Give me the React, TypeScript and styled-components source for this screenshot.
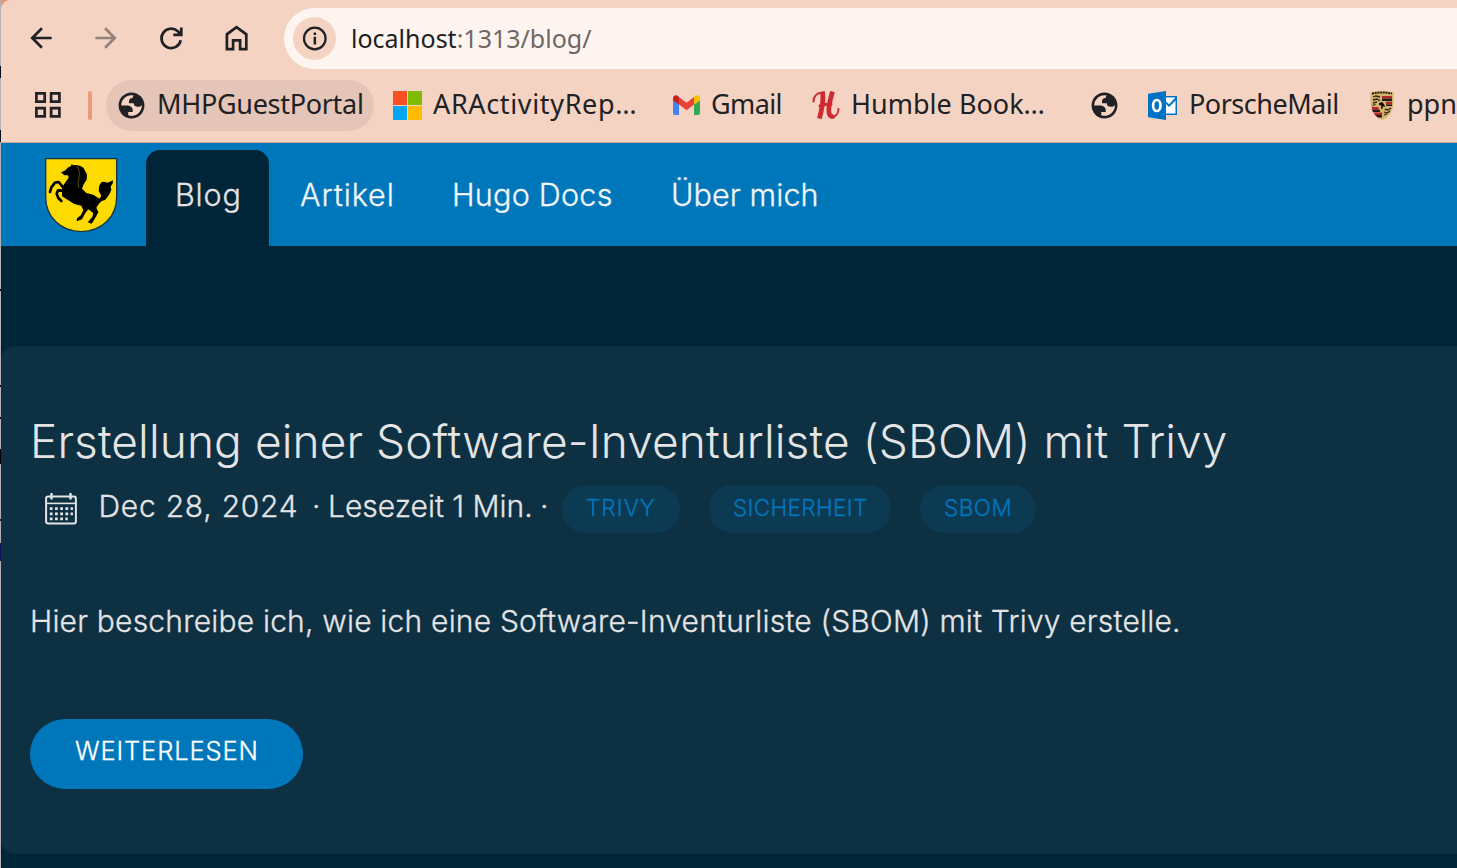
import React from 'react';
import styled, { createGlobalStyle } from 'styled-components';

const GlobalStyle = createGlobalStyle`
  *, *::before, *::after { box-sizing: border-box; }
  body { margin: 0; background: #012538; overflow: hidden; }
`;

const Window = styled.div`
  width: 1457px;
  height: 868px;
  overflow: hidden;
  display: grid;
  grid-template-columns: 1px 1456px;
  background: #012538;
`;

const DesktopEdge = styled.div`
  background: linear-gradient(
    #b4b2b1 0 66px, #0a0a20 66px 78px, #b4b2b1 78px 130px, #0a0a20 130px 142px,
    #b4b2b1 142px 289px, #111 289px 291px, #b4b2b1 291px 385px, #111 385px 387px,
    #b4b2b1 387px 417px, #111 417px 419px, #b4b2b1 419px 449px, #000 449px 464px,
    #b4b2b1 464px 519px, #111 519px 521px, #b4b2b1 521px 543px, #061052 543px 561px, #b4b2b1 561px
  );
`;

const Browser = styled.div`
  display: flex;
  flex-direction: column;
  min-width: 0;
  overflow: hidden;
  background: #e99671;
`;

const Chrome = styled.header`
  height: 143px;
  flex: none;
  background: #f5d3c3;
  border-bottom: 1px solid #cfa899;
  border-top-left-radius: 9px;
  font-family: "Noto Sans", "Open Sans", sans-serif;
  color: #202124;
`;

const Toolbar = styled.div`
  display: flex;
  align-items: center;
  height: 77px;
  padding: 8px 0 8px 24px;
`;

const ToolButton = styled.div<{ $faded?: boolean }>`
  width: 32px;
  height: 61px;
  margin-right: 33px;
  padding-bottom: 1px;
  flex: none;
  display: flex;
  align-items: center;
  opacity: ${p => (p.$faded ? 0.45 : 1)};
`;

const AddressBar = styled.div`
  flex: 1;
  height: 61px;
  margin-left: -1px;
  display: flex;
  align-items: center;
  padding-left: 9px;
  border-radius: 31px 0 0 31px;
  background: #fef5f1;
  font-size: 25px;
  line-height: 61px;
  white-space: pre;
`;

const InfoBadge = styled.div`
  width: 43px;
  height: 43px;
  margin-right: 15px;
  border-radius: 50%;
  background: #f5d3c3;
  display: flex;
`;

const UrlPath = styled.span`
  color: #6f6864;
`;

const BookmarkBar = styled.div`
  display: flex;
  align-items: center;
  height: 56px;
  padding-left: 33px;
  svg { flex: none; }
`;

const Divider = styled.i`
  width: 4px;
  height: 29px;
  margin: 0 14px 0 26px;
  border-radius: 2px;
  background: #ea9b77;
  flex: none;
`;

const Bookmark = styled.div<{ $width: number; $gap?: number; $spacing?: number; $active?: boolean }>`
  flex: none;
  display: flex;
  align-items: center;
  height: 51px;
  width: ${p => p.$width}px;
  margin-right: ${p => (p.$active ? 19 : 0)}px;
  gap: ${p => p.$gap ?? 11}px;
  padding-left: ${p => (p.$active ? 10 : 0)}px;
  border-radius: 26px;
  background: ${p => (p.$active ? '#e4c5b8' : 'transparent')};
  font-size: 27px;
  line-height: 47px;
  letter-spacing: ${p => p.$spacing ?? 0}px;
  white-space: nowrap;
`;

const Label = styled.span`
  height: 51px;
`;

const Site = styled.div`
  flex: 1;
  background: #012538;
  font-family: Inter, "Liberation Sans", sans-serif;
  font-weight: 300;
  -webkit-text-stroke: 0.3px currentColor;
  color: #e4e4e4;
  white-space: nowrap;
`;

const NavBar = styled.nav`
  height: 103px;
  padding-left: 43px;
  display: flex;
  align-items: flex-end;
  background: #0077bb;
`;

const Brand = styled.div`
  width: 102px;
  height: 96px;
`;

const NavItem = styled.a<{ $width: number; $spacing: number; $active?: boolean }>`
  width: ${p => p.$width}px;
  height: 96px;
  padding-left: 29px;
  margin-right: 2px;
  border-radius: 14px 14px 0 0;
  background: ${p => (p.$active ? '#012538' : 'transparent')};
  color: ${p => (p.$active ? '#e4e4e4' : '#f2f6f9')};
  font-size: 30.5px;
  line-height: 90px;
  letter-spacing: ${p => p.$spacing}px;
`;

const Card = styled.article`
  height: 508px;
  margin-top: 100px;
  padding: 66px 0 0 29px;
  border-radius: 14px 0 0 14px;
  background: #0e3043;
`;

const Title = styled.h1`
  margin: 0;
  height: 73px;
  font-size: 46px;
  line-height: 58px;
  font-weight: 300;
  letter-spacing: 0.09px;
  -webkit-text-stroke: 0;
`;

const Meta = styled.div`
  display: flex;
  height: 48px;
  font-size: 30px;
  line-height: 43px;
`;

const CalendarIcon = styled.svg`
  width: 32px;
  height: 37px;
  margin: 7px 22px 0 14.5px;
`;

const MetaText = styled.span<{ $width: number; $spacing?: number }>`
  width: ${p => p.$width}px;
  letter-spacing: ${p => p.$spacing ?? 0}px;
  flex: none;
`;

const Tag = styled.a<{ $width: number; $spacing: number }>`
  width: ${p => p.$width}px;
  height: 48px;
  margin-right: 29px;
  padding-left: 24px;
  border-radius: 24px;
  background: #0c3a52;
  color: #0275bb;
  font-size: 22.5px;
  line-height: 45px;
  letter-spacing: ${p => p.$spacing}px;
`;

const Summary = styled.p`
  margin: 67px 0 76px 0;
  font-size: 30px;
  line-height: 43px;
  letter-spacing: 0.2px;
`;

const ReadMore = styled.a`
  display: block;
  width: 273px;
  height: 70px;
  padding-left: 45px;
  border-radius: 35px;
  background: #0077bb;
  color: #fff;
  font-size: 25.5px;
  line-height: 64px;
  letter-spacing: 0.85px;
`;

const Globe = () => (
  <svg width="31" height="31" viewBox="0 0 24 24">
    <circle cx="12" cy="12" r="10" fill="#202124" />
    <path fill="#f5d3c3" d="M4 12h4.400c3.407.022 4.922 1.730 4.543 5.127H9.488v2.470a8.004 8.004 0 0 0 10.498-8.080C19.327 12.500 18.332 13 17 13c-2.137 0-3.206-.916-3.206-2.750h-3.748c-.274-2.728.683-4.092 2.870-4.092 0-.975.327-1.597.811-1.970A8.004 8.004 0 0 0 4 12z" />
  </svg>
);

const Windows = () => (
  <svg width="29" height="29" viewBox="0 0 29 29">
    <path fill="#f65022" d="M0 0h14v14H0z" />
    <path fill="#80bb03" d="M15 0h14v14H15z" />
    <path fill="#02a6f2" d="M0 15h14v14H0z" />
    <path fill="#ffba02" d="M15 15h14v14H15z" />
  </svg>
);

const Gmail = () => (
  <svg width="27" height="20" viewBox="0 0 27 20">
    <path fill="#4285f4" d="M0 5l6 4v11H2a2 2 0 0 1-2-2z" />
    <path fill="#34a853" d="M21 9l6-4v13a2 2 0 0 1-2 2h-4z" />
    <path fill="#ea4335" d="M6 2l7.500 5.700L21 2v7.500l-7.500 5.700L6 9.500z" />
    <path fill="#c5221f" d="M0 3.200C0 .3 3-.8 5 1l1 1v7.500L0 5.500z" />
    <path fill="#fbbc04" d="M27 3.200C27 .3 24-.8 22 1l-1 1v7.500l6-4z" />
  </svg>
);

const Humble = () => (
  <svg width="28" height="28" viewBox="0 0 28 28" fill="none" stroke="#cf2a2f" strokeLinecap="round">
    <path strokeWidth="2" d="M1.500 10.500C1.500 5 5 1.800 9.500 1.800M20 26c3.500-.5 6.500-3.500 6.500-8" />
    <path strokeWidth="4.800" strokeLinecap="butt" d="M10.300.5C12 8 9.500 20 7.500 27.500M20.500 .5C18 9 15.500 19 17.500 23.500c.6 1.800 2.500 2.600 4.500 1.500" />
    <path strokeWidth="3" d="M8 15c3.500-1.500 7-2 11-2" />
  </svg>
);

const Outlook = () => (
  <svg width="29" height="29" viewBox="0 0 29 29">
    <path fill="#0072c6" d="M0 2.700L18 0v29L0 26.300z" />
    <path fill="#0072c6" d="M17 5h12v19H17z" />
    <path fill="#fff" d="M18 13l3 3 6.500-6.500V22.500H18zM18 6.500h9.500L21 13.200 18 10.400z" />
    <ellipse cx="8.800" cy="14.500" rx="3.700" ry="5.500" fill="none" stroke="#fff" strokeWidth="2.700" />
  </svg>
);

const Crest = () => (
  <svg width="24" height="29" viewBox="0 0 24 29">
    <path fill="#d5b36b" d="M.5 1.500Q12-1 23.500 1.500C23.500 11 24 17 20 23q-3.500 4.500-8 6-4.500-1.500-8-6C0 17 .5 11 .5 1.500z" />
    <path stroke="#2a1b14" strokeWidth="2" strokeDasharray="2 .7" fill="none" d="M2 2.500Q12 .5 22 2.500" />
    <path fill="#b3252c" d="M12 5h10v2.500H12zM14 11h8v2.500h-8zM2 16h7v2.500H2zM3.500 21.500H12V24H5z" />
    <path fill="#211b1b" d="M12 7.500h10v2.800H12zM15 13.500h7V15h-7zM2 18.500h8v2.500H3zM5 24h7v2.500H8z" />
    <path stroke="#30241a" strokeWidth="1.300" fill="none" d="M3 6l3-1 4 1M3 9l4-1 3 2M3 12l4-1M2.500 14.500l3-1M14 18l4 1 3-2M14 21l3 1 3-2M14 24l3-1" />
    <path fill="#d5b36b" d="M8 10h8v6q-1 3.500-4 4.500-3-1-4-4.500z" />
    <path fill="#15110f" d="M9 12l3-1 2 2 1 3-2-.5-1 3-1-1 .3-3L9 14z" />
  </svg>
);

const Shield = () => (
  <svg width="90" height="90" viewBox="28 24 270 270">
    <path fill="#fddb00" stroke="#173540" strokeWidth="4" d="M33 50H246V165C246 226 200 268 139.500 269C79 268 33 226 33 165Z" />
    <g transform="translate(4 21)">
      <path d="M75 70L86 65 95 56 105 51 107 45 112 49Q130 46 142 56L153 76 152 92 143 106 138 119 151 132 172 137 190 149 196 140 188 125 190 109 197 99 206 98 213 101 222 98 231 94 230 104 224 112 226 122 221 134 214 145 207 153 197 156 188 165 181 176 187 190 178 206 167 224 155 220 169 204 172 192 157 181 148 192 138 211 122 217 123 208 135 198 142 184 136 170 115 165 96 153 78 142 78 121 83 107 98 86 96 79 85 79Z" />
      <path fill="none" stroke="#000" strokeWidth="8" strokeLinejoin="round" strokeLinecap="round" d="M82 116L68 99 57 101 46 115 42 129M82 125L66 124 62 134 67 147 76 156" />
      <path fill="none" stroke="#8a7600" strokeWidth="2" d="M123 51q11 16 5 38q-5 15 1 27" />
    </g>
  </svg>
);

export default function App() {
  return (
    <>
      <GlobalStyle />
      <Window>
        <DesktopEdge />
        <Browser>
          <Chrome>
            <Toolbar>
              <ToolButton>
                <svg width="32" height="32" viewBox="0 0 24 24" fill="#202124"><path d="M20 11H7.830l5.590-5.590L12 4l-8 8 8 8 1.410-1.410L7.830 13H20v-2z" /></svg>
              </ToolButton>
              <ToolButton $faded>
                <svg width="32" height="32" viewBox="0 0 24 24" fill="#202124"><path d="M12 4l-1.410 1.410L16.170 11H4v2h12.170l-5.580 5.590L12 20l8-8z" /></svg>
              </ToolButton>
              <ToolButton>
                <svg width="32" height="32" viewBox="0 0 32 32" fill="none" stroke="#202124" strokeWidth="2.700">
                  <path d="M25.700 18.200A9.700 9.700 0 1 1 22.800 9.300L26 12.500M26.300 5.500V12.900H18.300" />
                </svg>
              </ToolButton>
              <ToolButton>
                <svg width="32" height="32" viewBox="0 0 32 32" fill="none" stroke="#202124" strokeWidth="2.700">
                  <path d="M6.900 27.200V12.300L16.500 5.200 26.300 12.300V27.200H20.100V18.400H13.100V27.200Z" />
                </svg>
              </ToolButton>
              <AddressBar>
                <InfoBadge>
                  <svg width="43" height="43" viewBox="0 0 43 43">
                    <circle cx="21.800" cy="21.500" r="10.800" fill="none" stroke="#202124" strokeWidth="2.200" />
                    <path fill="#202124" d="M20.600 15.500h2.500v2.500h-2.500zM20.600 19.800h2.500v7.600h-2.500z" />
                  </svg>
                </InfoBadge>
                <span>localhost<UrlPath>:1313/blog/</UrlPath></span>
              </AddressBar>
            </Toolbar>
            <BookmarkBar>
              <svg width="28" height="28" viewBox="0 0 28 28" fill="none" stroke="#202124" strokeWidth="2.700">
                <path d="M2.400 2.400h8.300v8.300H2.400zM17.100 2.400h8.300v8.300h-8.300zM2.400 17.100h8.300v8.300H2.400zM17.100 17.100h8.300v8.300h-8.300z" />
              </svg>
              <Divider />
              <Bookmark $width={268} $gap={10} $spacing={-0.3} $active><Globe /><Label>MHPGuestPortal</Label></Bookmark>
              <Bookmark $width={280} $spacing={0.65}><Windows /><Label>ARActivityRep…</Label></Bookmark>
              <Bookmark $width={139} $spacing={-0.6}><Gmail /><Label>Gmail</Label></Bookmark>
              <Bookmark $width={277} $spacing={0.02}><Humble /><Label>Humble Book…</Label></Bookmark>
              <Bookmark $width={59}><Globe /></Bookmark>
              <Bookmark $width={222} $gap={12} $spacing={-0.5}><Outlook /><Label>PorscheMail</Label></Bookmark>
              <Bookmark $width={90} $gap={13}><Crest /><Label>ppn</Label></Bookmark>
            </BookmarkBar>
          </Chrome>
          <Site>
            <NavBar>
              <Brand><Shield /></Brand>
              <NavItem $width={123} $spacing={0.8} $active>Blog</NavItem>
              <NavItem $width={150} $spacing={0.9}>Artikel</NavItem>
              <NavItem $width={217} $spacing={0.25}>Hugo Docs</NavItem>
              <NavItem $width={200} $spacing={0.1}>Über mich</NavItem>
            </NavBar>
            <Card>
              <Title>Erstellung einer Software-Inventurliste (SBOM) mit Trivy</Title>
              <Meta>
                <CalendarIcon viewBox="0 0 32 37" fill="none" stroke="#e4e4e4">
                  <rect x="1.100" y="4.400" width="29.800" height="27" rx="2" strokeWidth="2" />
                  <path strokeWidth="2.400" d="M6.500 1v6.500M25.500 1v6.500" />
                  <path strokeWidth="1.600" d="M1 11.400h30" />
                  <path strokeWidth="2.800" strokeDasharray="2.800 2.400" d="M4.800 16.700h23.200M4.800 21.800h23.200M4.800 26.900h18" />
                </CalendarIcon>
                <MetaText $width={213.5} $spacing={0.75}>Dec 28, 2024</MetaText>
                <MetaText $width={16}>·</MetaText>
                <MetaText $width={212} $spacing={0}>Lesezeit 1 Min.</MetaText>
                <MetaText $width={22}>·</MetaText>
                <Tag $width={118} $spacing={1.05}>TRIVY</Tag>
                <Tag $width={182} $spacing={0.35}>SICHERHEIT</Tag>
                <Tag $width={116} $spacing={0.5}>SBOM</Tag>
              </Meta>
              <Summary>Hier beschreibe ich, wie ich eine Software-Inventurliste (SBOM) mit Trivy erstelle.</Summary>
              <ReadMore>WEITERLESEN</ReadMore>
            </Card>
          </Site>
        </Browser>
      </Window>
    </>
  );
}
